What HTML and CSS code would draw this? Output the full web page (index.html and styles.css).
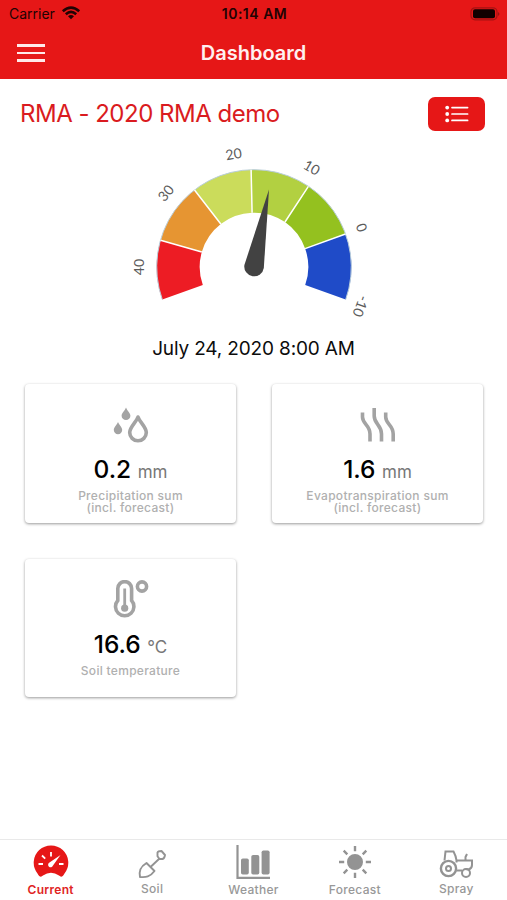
FILE: index.html
```html
<!DOCTYPE html>
<html lang="en">
<head>
    <meta charset="UTF-8">
    <title>Dashboard</title>
    <link rel="stylesheet" href="styles.css">
</head>
<body>
    <header>
        <div class="status-bar">
            <div class="carrier">
                <span>Carrier</span>
                <svg width="20" height="14" viewBox="0 0 20 14" fill="none" stroke="#210303" stroke-width="2.6">
                    <path d="M1.8 5.2Q10 -2 18.2 5.2"/>
                    <path d="M4.8 8.2Q10 3.6 15.2 8.2"/>
                    <path d="M7 10.2Q10 7.8 13 10.2L10 13.2Z" fill="#210303" stroke="none"/>
                </svg>
            </div>
            <div class="clock">10:14 AM</div>
            <svg class="battery" width="30" height="14" viewBox="0 0 30 14">
                <rect x="1" y=".8" width="26" height="12" rx="4" fill="none" stroke="#a51313" stroke-width="1.2"/>
                <rect x="3" y="2.3" width="22" height="9" rx="2" fill="#100"/>
                <path d="M28.3 5v4q2-2 0-4" fill="#7c1010"/>
            </svg>
        </div>
        <div class="nav-bar">
            <button class="menu-btn" aria-label="Menu"><span></span><span></span><span></span></button>
            <h1>Dashboard</h1>
        </div>
    </header>

    <main>
        <div class="station">
            <h2>RMA - 2020 RMA demo</h2>
            <button class="list-btn" aria-label="Stations">
                <svg width="24" height="18" viewBox="0 0 24 18" fill="#fff">
                    <circle cx="2.2" cy="2.6" r="1.9"/><circle cx="2.2" cy="9" r="1.9"/><circle cx="2.2" cy="15.4" r="1.9"/>
                    <path d="M7 2.6h15.6M7 9h15.6M7 15.4h15.6" stroke="#fff" stroke-width="1.7" stroke-linecap="round"/>
                </svg>
            </button>
        </div>

        <svg class="gauge" width="260" height="190" viewBox="-130 -130 260 190">
            <g class="segments">
                <path fill="#ed1c24" d="M-91.7 32.5A97.3 97.3 0 0 1 -93.5 -26.8L-52.2 -15A54.3 54.3 0 0 0 -51.2 18.1Z"/>
                <path fill="#e69532" d="M-93.5 -26.8A97.3 97.3 0 0 1 -59.5 -77L-33.2 -43A54.3 54.3 0 0 0 -52.2 -15Z"/>
                <path fill="#cbdc5b" d="M-59.5 -77A97.3 97.3 0 0 1 -2.9 -97.3L-1.9 -54.3A54.3 54.3 0 0 0 -33.2 -43Z"/>
                <path fill="#b2d041" d="M-2.9 -97.3A97.3 97.3 0 0 1 54.4 -80.7L31 -45A54.3 54.3 0 0 0 -1.9 -54.3Z"/>
                <path fill="#94c11f" d="M54.4 -80.7A97.3 97.3 0 0 1 91.5 -33L51.1 -18.4A54.3 54.3 0 0 0 31 -45Z"/>
                <path fill="#1f4bc8" d="M91.5 -33A97.3 97.3 0 0 1 91.7 32.5L51.2 18.1A54.3 54.3 0 0 0 51.1 -18.4Z"/>
            </g>
            <path class="rim" d="M-91.7 32.5A97.3 97.3 0 1 1 91.7 32.5"/>
            <path class="dividers" d="M-93.5 -26.8L-52.2 -15M-59.5 -77L-33.2 -43M-2.9 -97.3L-1.9 -54.3M54.4 -80.7L31 -45M91.5 -33L51.1 -18.4"/>
            <path class="needle" d="M15 -77.5L-9.6 -2A9.8 9.8 0 1 0 9.8 1Z"/>
            <g class="labels">
                <text transform="translate(-114.7 0) rotate(-90)" y="5">40</text>
                <text transform="translate(-88 -74) rotate(-50)" y="5">30</text>
                <text transform="translate(-20.3 -113) rotate(-10)" y="5">20</text>
                <text transform="translate(57.7 -99.3) rotate(30)" y="5">10</text>
                <text transform="translate(107.7 -39.3) rotate(70)" y="5">0</text>
                <text transform="translate(106.7 39.3) rotate(110)" y="5">-10</text>
            </g>
        </svg>

        <p class="date">July 24, 2020 8:00 AM</p>

        <div class="cards">
            <div class="card">
                <svg width="40" height="40" viewBox="0 0 40 40" fill="#a3a3a3">
                    <path d="M15 2.500C16 5.500 19.400 8 19.400 10.700A4.400 4.400 0 0 1 10.600 10.700C10.600 8 14 5.500 15 2.500Z"/>
                    <path d="M7 17C8 20 11.200 22 11.200 25A4.200 4.200 0 0 1 2.800 25C2.800 22 6 20 7 17Z"/>
                    <path d="M27 12C28.500 17 35.300 22 35.300 27.500A8.300 8.300 0 0 1 18.700 27.500C18.700 22 25.500 17 27 12Z" fill="none" stroke="#a3a3a3" stroke-width="3.600" stroke-linejoin="round"/>
                </svg>
                <div class="value">0.2 <span>mm</span></div>
                <div class="caption">Precipitation sum<br>(incl. forecast)</div>
            </div>
            <div class="card">
                <svg width="40" height="40" viewBox="0 0 40 40" fill="none" stroke="#a3a3a3" stroke-width="3.600" stroke-linecap="butt">
                    <path d="M4.500 7.500V12C4.500 19 12 20 12 29V36.500"/>
                    <path d="M16.200 3V11C16.200 19 23.500 20 23.500 29V36.500"/>
                    <path d="M27.700 7.500V12C27.700 19 35.200 20 35.200 29V36.500"/>
                </svg>
                <div class="value">1.6 <span>mm</span></div>
                <div class="caption">Evapotranspiration sum<br>(incl. forecast)</div>
            </div>
            <div class="card">
                <svg width="40" height="40" viewBox="0 0 40 40" fill="none" stroke="#a3a3a3" stroke-width="3.600">
                    <path d="M6.800 8.500A6.900 6.900 0 0 1 20.600 8.500V20.500A9.200 9.200 0 1 1 6.800 20.500Z"/>
                    <path d="M13.700 8.500V27" stroke-width="2.800"/>
                    <circle cx="13.700" cy="28.200" r="3.600" fill="#a3a3a3" stroke="none"/>
                    <circle cx="31" cy="6.500" r="4.600"/>
                </svg>
                <div class="value">16.6 <span>°C</span></div>
                <div class="caption">Soil temperature</div>
            </div>
        </div>
    </main>

    <nav class="tabs">
        <a class="tab active">
            <svg width="38" height="38" viewBox="0 0 38 38">
                <path d="M11 32.500C9 34.500 7.500 34 5.500 30.500A17.300 17.300 0 1 1 32.500 30.500C30.500 34 29 34.500 27 32.500Q19 27 11 32.500Z" fill="#e61717"/>
                <path d="M6.500 21H11M27 21h4.500M19 9v4.500M10 12.500l3.200 3.200" stroke="#fff" stroke-width="1.800"/>
                <path d="M28.500 12L21 22.500A2.500 2.500 0 1 1 17.500 19.500Z" fill="#fff"/>
            </svg>
            <span>Current</span>
        </a>
        <a class="tab soil">
            <svg width="38" height="38" viewBox="0 0 38 38" fill="none" stroke="#939393" stroke-width="1.900" stroke-linejoin="round">
                <path d="M13.500 20L21.500 28C17 34 13 34.500 7 34C6 28 7 24 13.500 20Z"/>
                <path d="M17.500 24L26.500 15.500M24.500 13.200V9.500Q25 8 28.500 8L32 12Q31.500 15.500 29.500 16H26.500Z"/>
            </svg>
            <span>Soil</span>
        </a>
        <a class="tab">
            <svg width="38" height="38" viewBox="0 0 38 38" fill="#939393">
                <path d="M3.500 2V34.800H36" fill="none" stroke="#939393" stroke-width="2.200"/>
                <rect x="7" y="15.500" width="7.800" height="16" rx="1.800"/>
                <rect x="17.300" y="12" width="8" height="19.500" rx="1.800"/>
                <rect x="27.600" y="7.500" width="8" height="24" rx="1.800"/>
            </svg>
            <span>Weather</span>
        </a>
        <a class="tab">
            <svg width="38" height="38" viewBox="0 0 38 38" fill="#939393" stroke="#939393" stroke-width="2.400">
                <circle cx="19" cy="19" r="6.800"/>
                <path d="M19 3V8.200M19 29.800V35M3 19H8.200M29.800 19H35M7.700 7.700l3.600 3.600M26.700 26.700l3.600 3.600M7.700 30.300l3.600-3.600M26.700 11.300l3.600-3.600"/>
            </svg>
            <span>Forecast</span>
        </a>
        <a class="tab spray">
            <svg width="38" height="38" viewBox="0 0 38 38" fill="none" stroke="#939393" stroke-width="2">
                <circle cx="11.500" cy="25.500" r="7.600" stroke-width="2.400"/>
                <circle cx="11.500" cy="25.500" r="2.500"/>
                <circle cx="29" cy="30" r="4"/>
                <path d="M7.500 17.500L8.500 8.500H16.500Q19 13 19.500 17.500H35V22Q35 25.500 31.500 26.500L28.500 26M19.500 27.500H25M28.500 17V14L30 11M19.500 17.500V19.500"/>
            </svg>
            <span>Spray</span>
        </a>
    </nav>
</body>
</html>
```

FILE: styles.css
```css
* { box-sizing: border-box; }
body { margin: 0; height: 900px; display: flex; flex-direction: column; background: #fff; color: #0c0c0c; font-family: Inter, "Liberation Sans", sans-serif; overflow: hidden; }
h1, h2, p { margin: 0; font-weight: normal; }
button { border: none; padding: 0; cursor: pointer; }
svg { display: block; flex: none; }

header { height: 79px; background: #e61717; }
.status-bar { display: grid; grid-template-columns: 1fr auto 1fr; height: 27px; padding: 0 7px 0 9px; align-items: center; color: #210303; font-size: 14px; }
.carrier { display: flex; align-items: center; gap: 6px; }
.carrier svg { margin-top: -2px; }
.clock { font-weight: 600; letter-spacing: 0.5px; }
.battery { justify-self: end; }
.nav-bar { display: grid; grid-template-columns: 1fr auto 1fr; align-items: center; height: 52px; padding: 0 17px; }
.menu-btn { width: 28px; display: flex; flex-direction: column; gap: 5px; background: none; }
.menu-btn span { height: 2.4px; background: #ffe9e9; }
h1 { color: #fff0f0; font-size: 20px; line-height: 24px; font-weight: 600; }

main { flex: 1; padding: 18px 22px 0 21px; display: flex; flex-direction: column; }
.station { display: flex; justify-content: space-between; align-items: center; height: 34px; }
h2 { color: #da1b20; font-size: 24px; line-height: 30px; letter-spacing: -0.5px; margin-left: -1px; }
.list-btn { width: 57px; height: 34px; border-radius: 7px; background: #e61717; display: flex; align-items: center; justify-content: center; }

.gauge { align-self: center; margin: 6px 0 0 1px; }
.segments path { stroke: none; }
.rim { fill: none; stroke: #b9cedb; stroke-width: 1; }
.dividers { stroke: #fff; stroke-width: 1.5px; }
.needle { fill: #424242; }
.labels { font-family: Lato, sans-serif; font-size: 14px; fill: #5c5c5c; text-anchor: middle; }
.date { text-align: center; font-size: 19px; line-height: 24px; letter-spacing: -0.15px; margin: 10px 0 0 1px; }

.cards { display: grid; grid-template-columns: 211px 211px; gap: 36px; margin: 23px 0 0 4px; }
.card { height: 138.5px; padding-top: 21px; border-radius: 4px; background: #fff; box-shadow: 0 1px 3px rgba(0, 0, 0, 0.4); display: flex; flex-direction: column; align-items: center; }
.value { margin-top: 9px; font-size: 24.5px; line-height: 30px; font-weight: 500; color: #000; }
.value span { font-size: 17px; font-weight: normal; color: #777; }
.caption { margin-top: 3px; font-size: 12px; line-height: 12px; letter-spacing: 0.3px; font-weight: 500; color: #b0b0b0; text-align: center; }

.tabs { height: 61px; border-top: 1px solid #e9e9e9; display: grid; grid-template-columns: repeat(5, 1fr); }
.tab { display: flex; flex-direction: column; align-items: center; padding-top: 3px; color: #989898; font-size: 12px; letter-spacing: 0.3px; font-weight: 500; line-height: 15px; }
.tab span { margin-top: 1px; }
.soil span, .spray span { margin-top: 0; }
.active { color: #e02424; font-weight: 600; }
```
